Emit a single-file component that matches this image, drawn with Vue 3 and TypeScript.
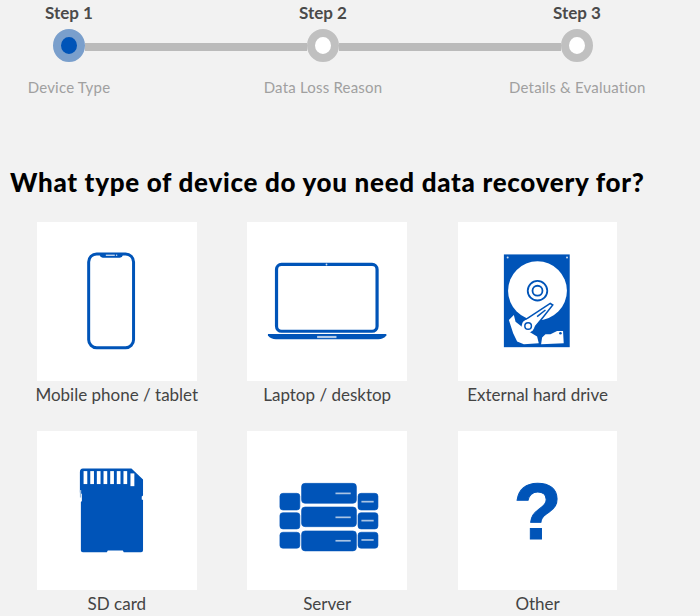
<template>
  <div class="page">
    <div class="step-row">
      <span v-for="step in steps" :key="step.title" class="step-title">{{ step.title }}</span>
    </div>
    <div class="track">
      <template v-for="(step, i) in steps" :key="step.title">
        <span class="bar" v-if="i > 0"></span>
        <span class="dot" :class="{ active: i === 0 }"></span>
      </template>
    </div>
    <div class="step-row labels">
      <span v-for="step in steps" :key="step.title" class="step-label">{{ step.label }}</span>
    </div>

    <h1 class="heading">What type of device do you need data recovery for?</h1>

    <div class="devices">
      <div class="device">
        <div class="card">
          <svg viewBox="0 0 160 159">
            <rect x="51.8" y="31.8" width="45" height="94" rx="8" fill="none" stroke="#0054b8" stroke-width="3" />
            <path d="M62 31h25l-1.5 3.2q-.8 1.4-2.5 1.4H66q-1.7 0-2.5-1.4z" fill="#0054b8" />
            <rect x="69" y="32.5" width="9" height="1.3" fill="#cfdef0" />
            <circle cx="79.8" cy="33.2" r=".8" fill="#cfdef0" />
          </svg>
        </div>
        <p class="name">Mobile phone / tablet</p>
      </div>

      <div class="device">
        <div class="card">
          <svg viewBox="0 0 160 159">
            <rect x="29.6" y="42.3" width="100.8" height="67" rx="5" fill="none" stroke="#0054b8" stroke-width="3.2" />
            <circle cx="79.7" cy="42.4" r=".9" fill="#cfdef0" />
            <path d="M21 112h118.7v1.5q-3 3.8-8 3.8H29q-5 0-8-3.8z" fill="#0054b8" />
            <rect x="70.3" y="114" width="19.4" height="2.2" fill="#b5cce8" />
          </svg>
        </div>
        <p class="name">Laptop / desktop</p>
      </div>

      <div class="device">
        <div class="card">
          <svg viewBox="0 0 160 159">
            <rect x="46" y="32.3" width="66" height="93" fill="#0054b8" />
            <circle cx="49.8" cy="35.5" r="1" fill="#cfdef0" />
            <circle cx="109.3" cy="35.5" r="1" fill="#cfdef0" />
            <circle cx="79.7" cy="68.7" r="29.5" fill="#fff" />
            <circle cx="79.7" cy="68.7" r="9.8" fill="none" stroke="#0054b8" stroke-width="1.8" />
            <circle cx="79.7" cy="68.7" r="5" fill="none" stroke="#0054b8" stroke-width="1.8" />
            <path d="M66.5 98.5 78 91 92.5 81.5 95 83 85.5 95 76 106.5Z" fill="#fff" stroke="#0054b8" stroke-width="1.5" />
            <path d="M79.3 94.7 87.7 88" stroke="#0054b8" stroke-width="1.5" />
            <path d="M51 98 56 93 57.7 99.7 66 106.3 71 109.7 79.3 114.7 81 121.3 66 122.3 59.3 119.7 55.3 111.3Z" fill="#fff" />
            <circle cx="70.3" cy="104" r="6.5" fill="#fff" />
            <circle cx="70.3" cy="104" r="3.3" fill="none" stroke="#0054b8" stroke-width="1.5" />
            <path d="M84.3 115.7 87.7 112.3H92.7L99.3 109H105.3L106 121.3 83.3 122.3Z" fill="#fff" />
            <circle cx="102.7" cy="111.3" r="1.3" fill="#0054b8" />
          </svg>
        </div>
        <p class="name">External hard drive</p>
      </div>

      <div class="device">
        <div class="card">
          <svg viewBox="0 0 160 159">
            <path d="M46 37.3H94.7L106.3 48.3V64.5L105 65.5V68.5L106.3 69V119.3Q106.3 121.3 104.3 121.3H87L86 119.5H71L70 121.3H46Q44 121.3 44 119.3V71L45 70V63L43 61.5V41Q43 37.3 46 37.3Z" fill="#0054b8" />
            <rect x="43" y="59" width="1.3" height="7.5" fill="#9dbde0" />
            <g fill="#fff">
              <rect v-for="x in contacts" :key="x" :x="x" y="40" width="3.7" height="13" />
              <rect x="93.7" y="42.3" width="3.9" height="12.8" />
            </g>
          </svg>
        </div>
        <p class="name">SD card</p>
      </div>

      <div class="device">
        <div class="card">
          <svg viewBox="0 0 160 159">
            <g fill="#0054b8" stroke="#0054b8" stroke-width=".6">
              <rect x="54.7" y="52.3" width="55" height="20" rx="3.5" />
              <rect x="54.7" y="76" width="55" height="19.7" rx="3.5" />
              <rect x="54.7" y="100" width="55" height="20" rx="3.5" />
              <rect x="33" y="62.3" width="20" height="16.7" rx="3" />
              <rect x="33" y="81.7" width="20" height="16.3" rx="3" />
              <rect x="33" y="101.3" width="20" height="16" rx="3" />
              <rect x="111.3" y="62.3" width="20" height="16.7" rx="3" />
              <rect x="111.3" y="81.7" width="20" height="16.3" rx="3" />
              <rect x="111.3" y="101.3" width="20" height="16" rx="3" />
            </g>
            <g fill="#a9c4e4">
              <rect x="88.7" y="61.5" width="15.3" height="1.7" />
              <rect x="88.7" y="85.5" width="15.3" height="1.7" />
              <rect x="88.7" y="109" width="15.3" height="1.7" />
              <rect x="114.7" y="69.8" width="12.3" height="1.7" />
              <rect x="114.7" y="88.8" width="12.3" height="1.7" />
              <rect x="114.7" y="108.2" width="12.3" height="1.7" />
            </g>
          </svg>
        </div>
        <p class="name">Server</p>
      </div>

      <div class="device">
        <div class="card">
          <svg viewBox="0 0 160 159">
            <text class="question" x="79.8" y="108.5">?</text>
          </svg>
        </div>
        <p class="name">Other</p>
      </div>
    </div>
  </div>
</template>

<script setup lang="ts">
const steps = [
  { title: 'Step 1', label: 'Device Type' },
  { title: 'Step 2', label: 'Data Loss Reason' },
  { title: 'Step 3', label: 'Details & Evaluation' },
]

// left edge of each white contact on the sd card
const contacts = [46.7, 53.4, 60, 66.7, 73.4, 80, 86.7]
</script>

<style>
html,
body {
  background: #f2f2f2;
  overflow: hidden;
}
</style>

<style scoped>
.page {
  height: 616px;
  overflow: hidden;
  background: #f2f2f2;
  font-family: "Lato", "Liberation Sans", sans-serif;
}

.step-row {
  display: grid;
  grid-template-columns: repeat(3, 136px);
  column-gap: 118px;
  padding: 3px 0 0 1px;
  height: 29px;
  box-sizing: border-box;
}

.step-title {
  text-align: center;
  font-size: 17px;
  line-height: 20px;
  font-weight: 700;
  color: #4a4a4a;
}

.track {
  display: flex;
  margin-left: 53px;
  height: 33px;
}

.dot {
  flex: none;
  width: 32px;
  height: 33px;
  border-radius: 50%;
  box-sizing: border-box;
  border: 8px solid #c0c0c0;
  background: #fff;
}

.dot.active {
  border-color: #7a9fcc;
  background: #0054b8;
}

.bar {
  flex: none;
  width: 222px;
  height: 8px;
  margin-top: 14px;
  background: #bbb;
}

.labels {
  padding-top: 15px;
  height: 41px;
}

.step-label {
  text-align: center;
  font-size: 15px;
  letter-spacing: .2px;
  line-height: 20px;
  color: #a0a0a0;
  white-space: nowrap;
}

.heading {
  margin: 0;
  padding: 61px 0 0 10px;
  height: 119px;
  box-sizing: border-box;
  font-size: 26px;
  letter-spacing: .7px;
  line-height: 36px;
  font-weight: 900;
  color: #000;
  white-space: nowrap;
}

.devices {
  display: grid;
  grid-template-columns: repeat(3, 159.6px);
  column-gap: 50.8px;
  padding-left: 37px;
}

.device {
  height: 209px;
}

.card {
  display: flex;
  height: 159px;
  background: #fff;
}

.card svg {
  width: 100%;
  height: 159px;
}

.name {
  margin: 4px -10px 0;
  text-align: center;
  font-size: 17px;
  line-height: 20px;
  color: #444;
  white-space: nowrap;
}

.question {
  font-family: "Liberation Sans", sans-serif;
  font-size: 79px;
  font-weight: 700;
  text-anchor: middle;
  fill: #0054b8;
  stroke: #0054b8;
  stroke-width: 1px;
}
</style>
